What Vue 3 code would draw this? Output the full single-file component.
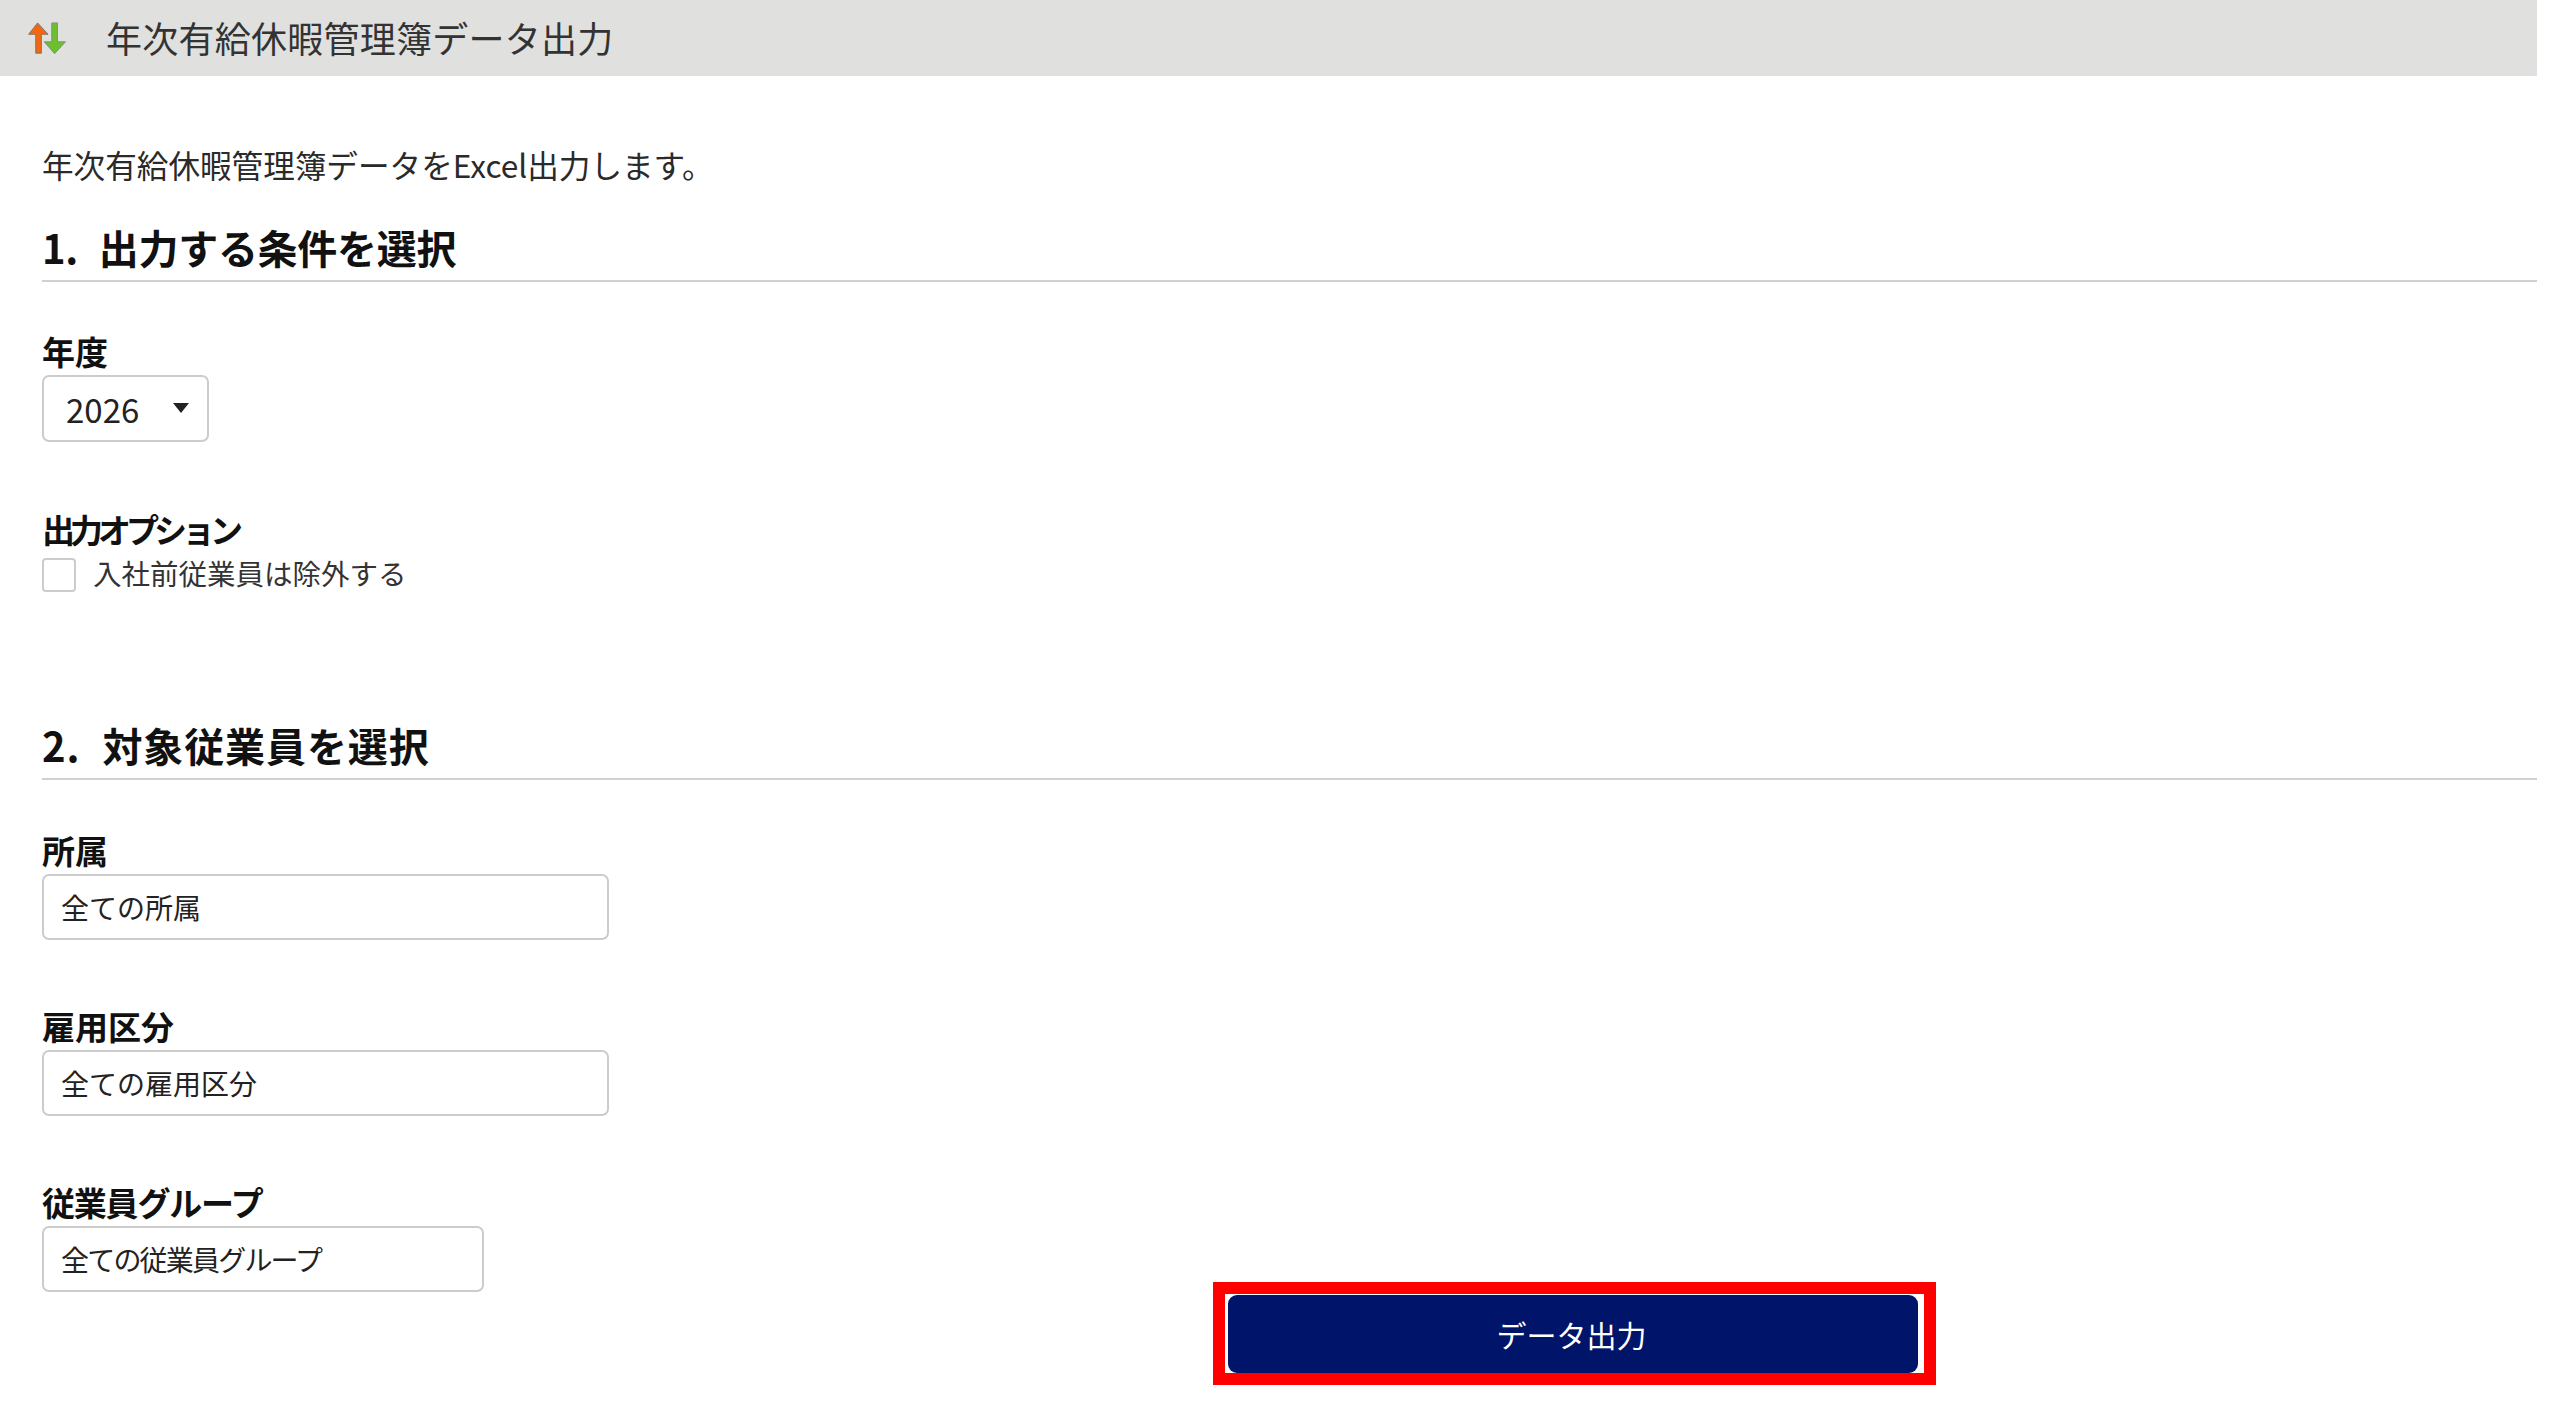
<script setup>
const fields = [
  { label: '所属', value: '全ての所属', cls: 'wide' },
  { label: '雇用区分', value: '全ての雇用区分', cls: 'wide' },
  { label: '従業員グループ', value: '全ての従業員グループ', cls: 'narrow', labelCls: 'kana' },
]
</script>

<template>
  <div class="page">
    <header class="bar">
      <svg class="icon" viewBox="0 0 42 36" aria-hidden="true">
        <path d="M10 1 L21 13 H14 V33 H8 V13 H0.5 Z" fill="#f4660f" stroke="#7d7368" stroke-width="1" />
        <path d="M25 1 H31 V21 H39.5 L28 33.5 L17 21 H25 Z" fill="#6cc02c" stroke="#7f8f72" stroke-width="1" />
      </svg>
      <h1 class="title">年次有給休暇管理簿データ出力</h1>
    </header>

    <main class="content">
      <p class="desc">年次有給休暇管理簿データをExcel出力します。</p>

      <h2 class="section">1. 出力する条件を選択</h2>
      <div class="label first">年度</div>
      <div class="select">
        <span>2026</span>
        <i class="caret"></i>
      </div>

      <div class="label option">出力オプション</div>
      <label class="check">
        <span class="box"></span>
        <span class="check-text">入社前従業員は除外する</span>
      </label>

      <h2 class="section second">2. 対象従業員を選択</h2>
      <div class="fields">
        <div v-for="f in fields" :key="f.label" class="field">
          <div class="label" :class="f.labelCls">{{ f.label }}</div>
          <div class="input" :class="f.cls">{{ f.value }}</div>
        </div>
      </div>
    </main>

    <div class="callout">
      <button class="submit" type="button">データ出力</button>
    </div>
  </div>
</template>

<style>
html, body { margin: 0; background: #fff; }
</style>

<style scoped>
.page {
  position: relative;
  width: 2537px;
  height: 1415px;
  overflow: hidden;
  font-family: "Noto Sans CJK JP", "Noto Sans", sans-serif;
  color: #222;
}
.bar {
  display: flex;
  align-items: center;
  height: 76px;
  padding-left: 28px;
  background: #e0e0de;
  box-sizing: border-box;
}
.icon { width: 40px; height: 34px; flex: none; margin-top: 1px; }
.title {
  margin: 0 0 3px 38px;
  font-size: 36px;
  font-weight: 400;
  line-height: 70px;
  color: #333;
  letter-spacing: 0.25px;
}
.content { padding-left: 42px; }
.desc {
  margin: 68px 0 0;
  font-size: 31.6px;
  line-height: 40px;
  color: #2a2a2a;
}
.section {
  margin: 40px 0 0;
  height: 56px;
  line-height: 46px;
  font-size: 40px;
  font-weight: 700;
  word-spacing: 12px;
  letter-spacing: -0.3px;
  color: #111;
  border-bottom: 2px solid #d0d0d0;
}
.section.second { margin-top: 130px; letter-spacing: 0.9px; }
.label {
  font-size: 33px;
  font-weight: 700;
  line-height: 40px;
  margin-bottom: 4px;
  color: #111;
}
.label.first { margin-top: 49px; }
.label.option { margin-top: 67px; letter-spacing: -5px; }
.label.kana { letter-spacing: -1.2px; }
.select {
  position: relative;
  width: 167px;
  height: 67px;
  box-sizing: border-box;
  padding: 1px 0 0 22px;
  display: flex;
  align-items: center;
  font-size: 33px;
  border: 2px solid #ccc;
  border-radius: 7px;
}
.caret {
  position: absolute;
  right: 18px;
  top: 26px;
  width: 0;
  height: 0;
  border-left: 8px solid transparent;
  border-right: 8px solid transparent;
  border-top: 10px solid #222;
}
.check {
  display: flex;
  align-items: center;
  gap: 17px;
  margin-top: 9px;
  height: 34px;
  font-size: 28.5px;
  color: #333;
}
.check-text { margin-top: -6px; }
.box {
  width: 34px;
  height: 34px;
  box-sizing: border-box;
  border: 2px solid #ccc;
  border-radius: 4px;
  flex: none;
}
.fields {
  display: flex;
  flex-direction: column;
  gap: 66px;
  margin-top: 50px;
}
.input {
  height: 66px;
  box-sizing: border-box;
  padding-left: 17px;
  display: flex;
  align-items: center;
  font-size: 28px;
  color: #222;
  border: 2px solid #ccc;
  border-radius: 7px;
}
.input.wide { width: 567px; }
.input.narrow { width: 442px; letter-spacing: -1.8px; }
.callout {
  position: absolute;
  left: 1213px;
  top: 1282px;
  width: 723px;
  height: 103px;
  box-sizing: border-box;
  border: 12px solid #ff0000;
  padding: 1px 6px 0 3px;
  background: #fff;
}
.submit {
  display: block;
  width: 100%;
  height: 78px;
  padding: 0 3px 0 0;
  border: 0;
  border-radius: 9px;
  background: #00146a;
  color: #fff;
  font-family: inherit;
  font-size: 30px;
  line-height: 1;
}
</style>
